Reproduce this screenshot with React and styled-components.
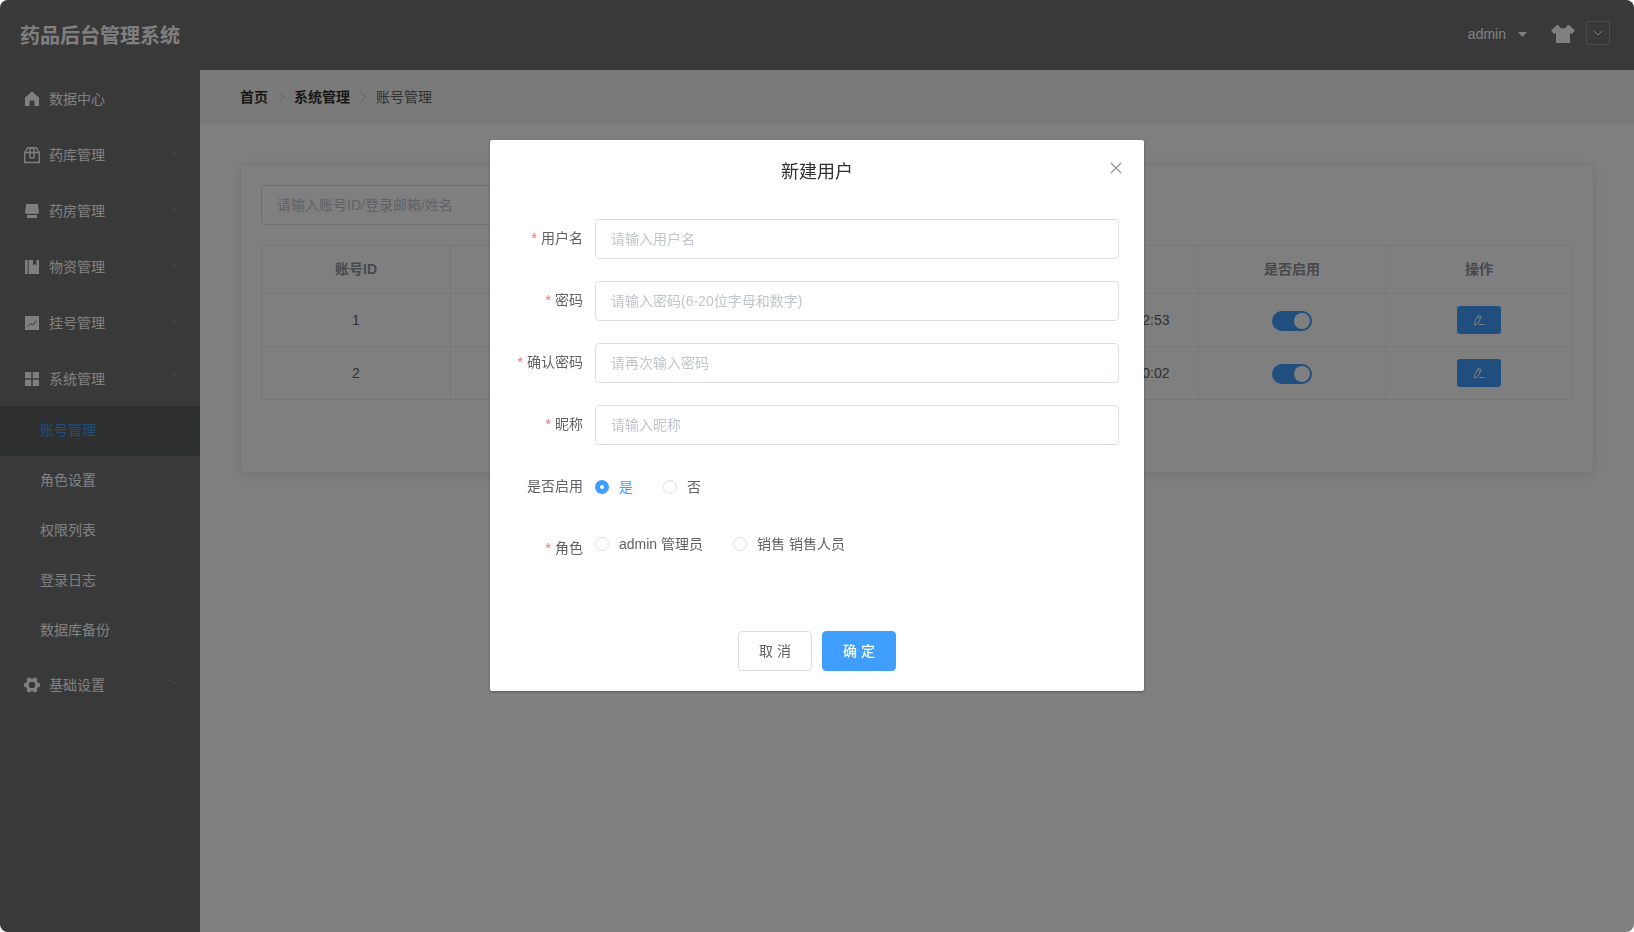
import React, { useState } from "react"
import styled, { createGlobalStyle } from "styled-components"

const GlobalStyle = createGlobalStyle`
  * {
    box-sizing: border-box;
  }
  body {
    margin: 0;
    background: #fff;
    font-family: "Liberation Sans", "Noto Sans CJK SC", sans-serif;
    font-size: 14px;
    color: #606266;
    overflow: hidden;
  }
  input, button {
    font-family: inherit;
    font-size: 14px;
  }
`;

const Page = styled.div`
  height: 100vh;
  display: flex;
  flex-direction: column;
  background: #fff;
  border-radius: 8px;
  overflow: hidden;
`;

const Header = styled.header`
  height: 70px;
  flex: none;
  background: #737373;
  display: flex;
  align-items: center;
  padding: 0 24px 0 20px;
`;

const HeaderTitle = styled.h1`
  margin: 0;
  padding-top: 2px;
  flex: 1;
  font-size: 20px;
  line-height: 28px;
  font-weight: bold;
  color: #fff;
`;

const UserMenu = styled.div`
  display: flex;
  align-items: center;
  color: #fff;
  padding: 0 24px 2px 0;
  line-height: 20px;
`;

const Caret = styled.svg`
  width: 9px;
  height: 5px;
  margin-left: 12px;
`;

const Shirt = styled.svg`
  width: 24px;
  height: 18px;
  margin: 0 11px 2px 0;
`;

const ThemePicker = styled.div`
  width: 24px;
  height: 24px;
  margin-bottom: 4px;
  border: 1px solid #999;
  border-radius: 2px;
  display: flex;
  align-items: center;
  justify-content: center;
  padding-bottom: 1px;
`;

const Body = styled.div`
  flex: 1;
  min-height: 0;
  display: flex;
`;

const Sidebar = styled.nav`
  width: 200px;
  flex: none;
  background: #737373;
`;

const MenuItem = styled.div`
  height: 56px;
  display: flex;
  align-items: center;
  padding: 2px 20px 0;
  color: #fff;
  line-height: 20px;
`;

const MenuIcon = styled.svg`
  width: 18px;
  height: 18px;
  margin: 0 8px 0 3px;
`;

const MenuName = styled.span`
  flex: 1;
`;

const MenuArrow = styled.svg`
  width: 12px;
  height: 12px;
  margin-bottom: 6px;
  transform: ${props => props.$open ? "rotate(180deg)" : "none"};
`;

const SubItem = styled.div`
  height: 50px;
  padding-left: 40px;
  line-height: 49px;
  color: ${props => props.$active ? "#409eff" : "#fff"};
  background: ${props => props.$active ? "#5c605e" : "transparent"};
`;

const Content = styled.main`
  flex: 1;
  min-width: 0;
`;

const Breadcrumb = styled.div`
  height: 54px;
  padding-left: 40px;
  background: #f5f5f5;
  display: flex;
  align-items: center;
`;

const Crumb = styled.span`
  color: ${props => props.$last ? "#606266" : "#303133"};
  font-weight: ${props => props.$last ? "normal" : "bold"};
  line-height: 20px;
`;

const CrumbArrow = styled.svg`
  width: 14px;
  height: 14px;
  margin: 0 6px;
`;

const Card = styled.section`
  height: 309px;
  margin: 40px 40px 0;
  padding: 20px;
  border: 1px solid #ebeef5;
  border-radius: 4px;
  box-shadow: 0 2px 12px rgba(0, 0, 0, 0.1);
`;

const Input = styled.input`
  display: block;
  width: ${props => props.$width || "100%"};
  height: 40px;
  padding: 0 15px;
  border: 1px solid #dcdfe6;
  border-radius: 4px;
  background: #fff;
  color: #606266;
  outline: none;
  &::placeholder {
    color: #c0c4cc;
    opacity: 1;
  }
`;

const Table = styled.div`
  margin-top: 20px;
  border-top: 1px solid #ebeef5;
  border-left: 1px solid #ebeef5;
`;

const Cell = styled.div`
  display: flex;
  align-items: center;
  justify-content: center;
  border-right: 1px solid #ebeef5;
  border-bottom: 1px solid #ebeef5;
  white-space: nowrap;
`;

const HeadCell = styled(Cell)`
  padding-bottom: 3px;
`;

const Row = styled.div`
  display: grid;
  grid-template-columns: 189px repeat(6, 1fr);
  height: ${props => props.$head ? "48px" : "53px"};
  color: ${props => props.$head ? "#909399" : "#606266"};
  font-weight: ${props => props.$head ? "bold" : "normal"};
`;

const Switch = styled.span`
  width: 40px;
  height: 20px;
  margin-top: 2px;
  padding: 2px;
  border-radius: 10px;
  background: #409eff;
  display: flex;
  justify-content: flex-end;
`;

const Knob = styled.span`
  width: 16px;
  height: 16px;
  border-radius: 50%;
  background: #fff;
`;

const EditButton = styled.button`
  width: 44px;
  height: 28px;
  margin-bottom: 1px;
  padding: 0;
  border: none;
  border-radius: 3px;
  background: #409eff;
  display: flex;
  align-items: center;
  justify-content: center;
`;

const Overlay = styled.div`
  position: fixed;
  inset: 0;
  background: rgba(0, 0, 0, 0.5);
  border-radius: 8px;
  display: flex;
  justify-content: center;
  align-items: flex-start;
  padding-top: 140px;
`;

const Dialog = styled.div`
  width: 654px;
  height: 551px;
  background: #fff;
  border-radius: 2px;
  box-shadow: 0 1px 3px rgba(0, 0, 0, 0.3);
`;

const DialogHeader = styled.div`
  height: 54px;
  padding: 20px 20px 10px;
  display: grid;
  grid-template-columns: 16px 1fr 16px;
`;

const DialogTitle = styled.h2`
  grid-column: 2;
  margin: 0;
  text-align: center;
  font-size: 18px;
  font-weight: normal;
  line-height: 24px;
  color: #303133;
`;

const CloseIcon = styled.svg`
  width: 16px;
  height: 16px;
`;

const DialogForm = styled.form`
  padding: 25px 25px 3px;
`;

const FormItem = styled.div`
  display: grid;
  grid-template-columns: 80px 1fr;
  height: 40px;
  margin-bottom: 22px;
`;

const Label = styled.label`
  display: flex;
  justify-content: flex-end;
  gap: 4px;
  padding-right: 12px;
  line-height: 39px;
  white-space: nowrap;
`;

const Star = styled.span`
  color: #f56c6c;
`;

const RadioGroup = styled.div`
  display: flex;
  gap: 30px;
  height: ${props => props.$short ? "30px" : "40px"};
`;

const RadioItem = styled.span`
  display: flex;
  align-items: center;
  gap: 10px;
  line-height: 20px;
  color: ${props => props.$checked ? "#409eff" : "#606266"};
`;

const RadioDot = styled.span`
  width: 14px;
  height: 14px;
  border-radius: 50%;
  border: ${props => props.$checked ? "5px solid #409eff" : "1px solid #dcdfe6"};
  background: #fff;
`;

const DialogFooter = styled.div`
  display: flex;
  justify-content: center;
  gap: 10px;
  padding-top: 37px;
`;

const Button = styled.button`
  width: 74px;
  height: 40px;
  padding: 0 0 2px;
  border: 1px solid ${props => props.$primary ? "#409eff" : "#dcdfe6"};
  border-radius: 4px;
  background: ${props => props.$primary ? "#409eff" : "#fff"};
  color: ${props => props.$primary ? "#fff" : "#606266"};
  font-weight: ${props => props.$primary ? 500 : "normal"};
`;

const icons = {
  home: <path fill="#fff" d="M9 1.6 16 7.4V16h-4.6v-4.6a.8.8 0 0 0-.8-.8H7.4a.8.8 0 0 0-.8.8V16H2V7.4z" />,
  box: (
    <g fill="none" stroke="#fff" strokeWidth="1.4">
      <path d="M1.7 6.5h14.6v10H1.7zM1.7 6.5 4.6 1.7h8.8l2.9 4.8M6.8 6.3 7.4 1.7M11.2 6.3l-.6-4.6" />
      <path d="M6.9 6.5v5.2h4.2V6.5" />
    </g>
  ),
  shop: <path fill="#fff" d="M3.2 2h11.6L16 10.6c0 .8-.6 1.4-1.3 1.4-.8 0-1.4-.5-1.4-.5s-.6.5-1.4.5-1.5-.5-1.5-.5-.6.5-1.4.5-1.5-.5-1.5-.5-.6.5-1.4.5-1.4-.5-1.4-.5-.7.5-1.4.5C2.6 12 2 11.4 2 10.6zM4 13h10v3H4z" />,
  book: <path fill="#fff" d="M2 2h2.6v14H2zM5.6 2H10v5.4l1.7-1.3 1.7 1.3V2H16v14H5.6z" />,
  chart: (
    <>
      <path fill="#fff" d="M2 2h14v14H2z" />
      <path fill="none" stroke="#737373" strokeWidth="1" d="m4.5 12.6 2.7-3 2.6 1.4 3.7-4.5" />
    </>
  ),
  grid: <path fill="#fff" d="M2 2h6.3v6.3H2zM9.7 2H16v6.3H9.7zM2 9.7h6.3V16H2zM9.7 9.7H16V16H9.7z" />,
  gear: (
    <>
      <circle cx="9" cy="9" r="4.9" fill="none" stroke="#fff" strokeWidth="3.2" />
      <path stroke="#fff" strokeWidth="3.6" d="M1 9h2M15 9h2M5 2.1l1 1.7M12 14.2l1 1.7M13 2.1l-1 1.7M6 14.2l-1 1.7" />
    </>
  ),
};

const menu = [
  { icon: "home", name: "数据中心", leaf: true },
  { icon: "box", name: "药库管理" },
  { icon: "shop", name: "药房管理" },
  { icon: "book", name: "物资管理" },
  { icon: "chart", name: "挂号管理" },
  { icon: "grid", name: "系统管理", children: ["账号管理", "角色设置", "权限列表", "登录日志", "数据库备份"] },
  { icon: "gear", name: "基础设置" },
];

const columns = ["账号ID", "", "", "", "", "是否启用", "操作"];

const users = [
  { id: 1, time: "2019-11-08 10:22:53" },
  { id: 2, time: "2019-11-08 10:30:02" },
];

const fields = [
  { label: "用户名", placeholder: "请输入用户名" },
  { label: "密码", placeholder: "请输入密码(6-20位字母和数字)" },
  { label: "确认密码", placeholder: "请再次输入密码" },
  { label: "昵称", placeholder: "请输入昵称" },
];

function Separator() {
  return (
    <CrumbArrow viewBox="0 0 14 14">
      <path d="M4.5 2 9.7 7l-5.2 5" fill="none" stroke="#c0c4cc" />
    </CrumbArrow>
  );
}

function Radio({ checked, onClick, children }) {
  return (
    <RadioItem $checked={checked} onClick={onClick}>
      <RadioDot $checked={checked} />
      {children}
    </RadioItem>
  );
}

function Menu() {
  return (
    <Sidebar>
      {menu.map(item => (
        <React.Fragment key={item.name}>
          <MenuItem>
            <MenuIcon viewBox="0 0 18 18">{icons[item.icon]}</MenuIcon>
            <MenuName>{item.name}</MenuName>
            {!item.leaf && (
              <MenuArrow viewBox="0 0 12 12" $open={!!item.children}>
                <path d="M2 4l4 4 4-4" fill="none" stroke="#909399" />
              </MenuArrow>
            )}
          </MenuItem>
          {item.children && item.children.map((name, i) => (
            <SubItem key={name} $active={i === 0}>{name}</SubItem>
          ))}
        </React.Fragment>
      ))}
    </Sidebar>
  );
}

function UserTable() {
  return (
    <Table>
      <Row $head>
        {columns.map((name, i) => <HeadCell key={i}>{name}</HeadCell>)}
      </Row>
      {users.map(user => (
        <Row key={user.id}>
          <Cell>{user.id}</Cell>
          <Cell />
          <Cell />
          <Cell />
          <Cell>{user.time}</Cell>
          <Cell><Switch><Knob /></Switch></Cell>
          <Cell>
            <EditButton>
              <svg width="12" height="12" viewBox="0 0 12 12" fill="none" stroke="#fff">
                <path d="M5.3 1.2 8.3 2.6 4.7 9.6 1.5 11l.2-3.3zM4.5 3l2.9 1.4M6 10.5h5.5" />
              </svg>
            </EditButton>
          </Cell>
        </Row>
      ))}
    </Table>
  );
}

function CreateUserDialog() {
  const [enabled, setEnabled] = useState(true);
  const [role, setRole] = useState("");

  return (
    <Overlay>
      <Dialog>
        <DialogHeader>
          <DialogTitle>新建用户</DialogTitle>
          <CloseIcon viewBox="0 0 16 16">
            <path d="m3 3 10 10M13 3 3 13" stroke="#909399" strokeWidth="1.1" />
          </CloseIcon>
        </DialogHeader>
        <DialogForm>
          {fields.map(field => (
            <FormItem key={field.label}>
              <Label><Star>*</Star>{field.label}</Label>
              <Input placeholder={field.placeholder} />
            </FormItem>
          ))}
          <FormItem>
            <Label>是否启用</Label>
            <RadioGroup>
              <Radio checked={enabled} onClick={() => setEnabled(true)}>是</Radio>
              <Radio checked={!enabled} onClick={() => setEnabled(false)}>否</Radio>
            </RadioGroup>
          </FormItem>
          <FormItem>
            <Label><Star>*</Star>角色</Label>
            <RadioGroup $short>
              <Radio checked={role === "admin"} onClick={() => setRole("admin")}>admin 管理员</Radio>
              <Radio checked={role === "sale"} onClick={() => setRole("sale")}>销售 销售人员</Radio>
            </RadioGroup>
          </FormItem>
        </DialogForm>
        <DialogFooter>
          <Button>取 消</Button>
          <Button $primary>确 定</Button>
        </DialogFooter>
      </Dialog>
    </Overlay>
  );
}

function App() {
  return (
    <>
      <GlobalStyle />
      <Page>
        <Header>
          <HeaderTitle>药品后台管理系统</HeaderTitle>
          <UserMenu>
            admin
            <Caret viewBox="0 0 9 5"><path d="M0 0h9L4.5 5z" fill="#fff" /></Caret>
          </UserMenu>
          <Shirt viewBox="0 0 24 18">
            <path fill="#fff" d="M6 0h1.5C9 4.8 15 4.8 16.5 0H18l6 5.5-3 3.5-2-1v10H5V8L3 9 0 5.5z" />
          </Shirt>
          <ThemePicker>
            <svg width="12" height="12" viewBox="0 0 12 12" fill="none" stroke="#fff">
              <path d="M2 4l4 4 4-4" />
            </svg>
          </ThemePicker>
        </Header>
        <Body>
          <Menu />
          <Content>
            <Breadcrumb>
              <Crumb>首页</Crumb>
              <Separator />
              <Crumb>系统管理</Crumb>
              <Separator />
              <Crumb $last>账号管理</Crumb>
            </Breadcrumb>
            <Card>
              <Input $width="300px" placeholder="请输入账号ID/登录邮箱/姓名" />
              <UserTable />
            </Card>
          </Content>
        </Body>
      </Page>
      <CreateUserDialog />
    </>
  );
}

export default App;
